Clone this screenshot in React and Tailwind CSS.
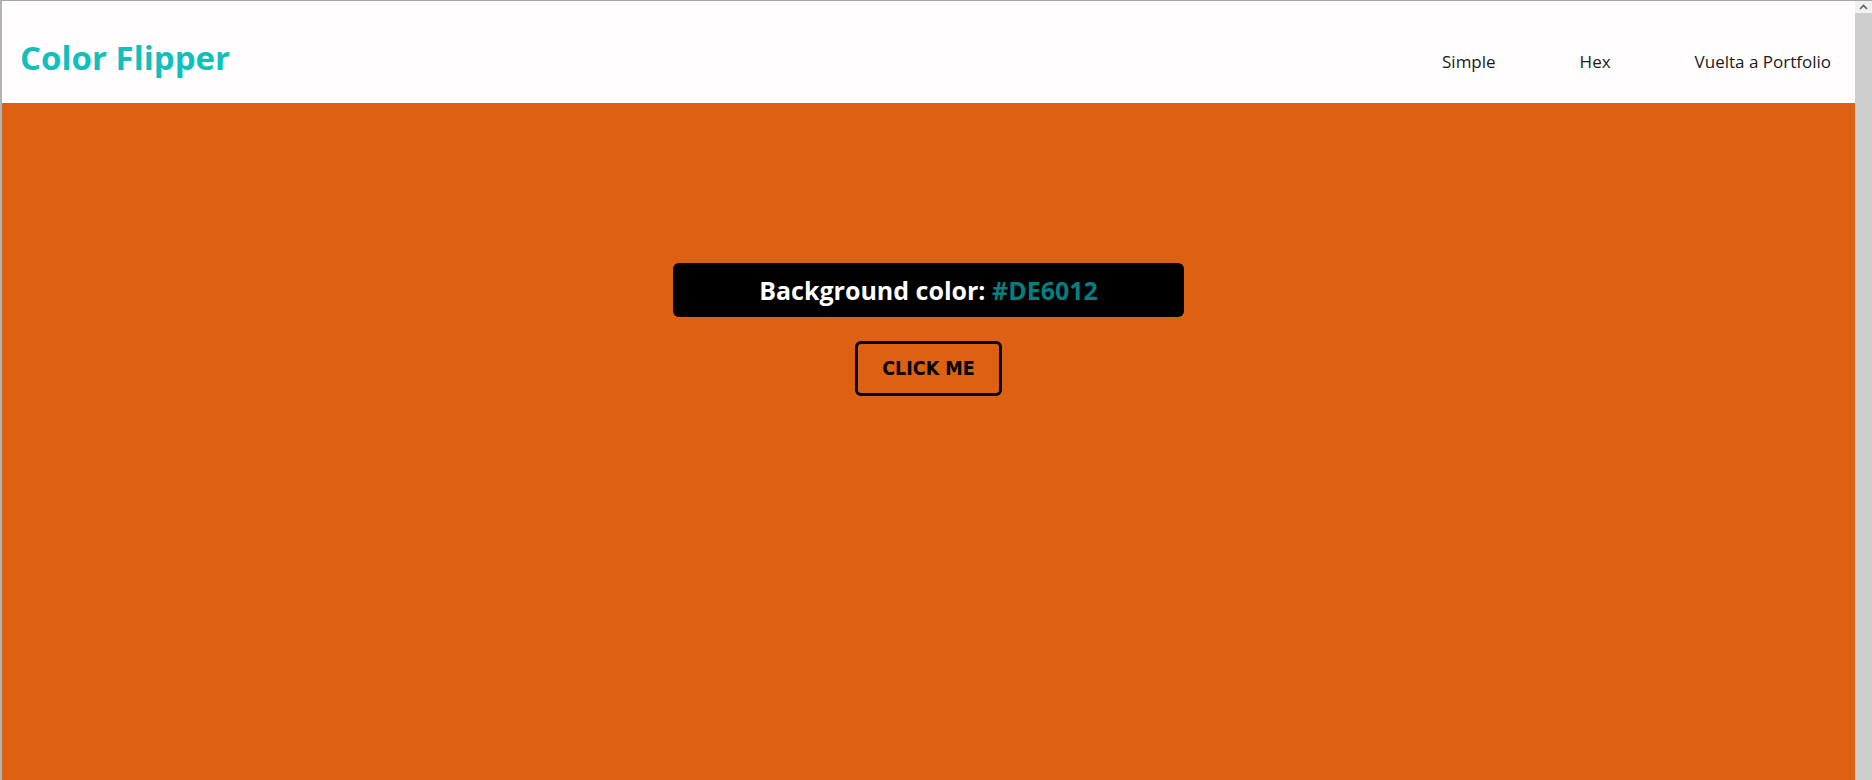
import React from 'react';

const sans = { fontFamily: '"Open Sans", "Liberation Sans", sans-serif' };

function Navbar() {
  return (
    <nav className="h-[102px] bg-[#fffdfe] flex items-start justify-between pl-[18px] pr-[24px]">
      <h1 className="pt-[40px] text-[33px] leading-none font-bold text-[#10c0bc]" style={sans}>
        Color Flipper
      </h1>
      <ul className="pt-[52px] flex items-start gap-[84px] text-[17px] leading-none text-[#1a1a1a]" style={sans}>
        <li><a href="#">Simple</a></li>
        <li><a href="#">Hex</a></li>
        <li><a href="#">Vuelta a Portfolio</a></li>
      </ul>
    </nav>
  );
}

export default function App() {
  return (
    <div className="h-[780px] w-full overflow-hidden flex flex-col border-t border-[#a6a6a6] bg-white">
      <div className="flex flex-1 min-h-0">
        <div className="w-[2px] bg-[#b0b4b8]" />
        <div className="flex-1 flex flex-col min-w-0">
          <Navbar />
          {/* Main */}
          <main className="flex-1 bg-[#de6012] flex flex-col items-center pt-[160px]">
            <div className="w-[511px] h-[54px] bg-black rounded-[6px] flex items-center justify-center">
              <h2 className="text-[25px] leading-none font-bold text-white" style={sans}>
                Background color: <span className="text-[#047f7e]">#DE6012</span>
              </h2>
            </div>
            <button
              className="mt-[24px] w-[147px] h-[55px] border-[3px] border-black rounded-[6px] text-[19.5px] font-bold text-black"
              style={{ fontFamily: '"DejaVu Sans Condensed", "DejaVu Sans", sans-serif' }}
            >
              CLICK ME
            </button>
          </main>
        </div>
        {/* Scrollbar */}
        <div className="w-[17px] flex flex-col bg-[#cdcdcd]">
          <div className="h-[12px] bg-[#f0f0f0] flex items-center justify-center">
            <svg width="9" height="6" viewBox="0 0 9 6">
              <path d="M1 5 L4.5 1.5 L8 5" stroke="#606060" strokeWidth="1.6" fill="none" />
            </svg>
          </div>
        </div>
      </div>
    </div>
  );
}
